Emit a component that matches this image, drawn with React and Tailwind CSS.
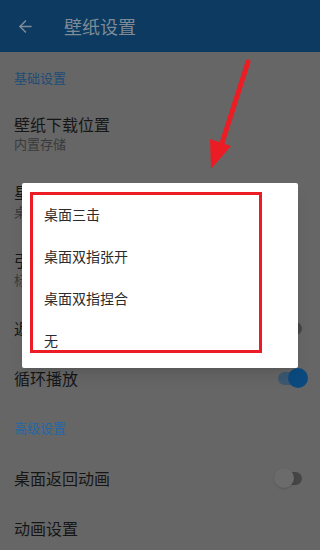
import React from 'react';
import { ArrowLeft } from 'lucide-react';

const font = { fontFamily: '"Noto Sans CJK SC", "Noto Sans", sans-serif' };

function Toggle({ on }) {
  return (
    <div className="relative w-[26px] h-[20px] flex items-center">
      <div className={`w-[24px] h-[13px] rounded-full ${on ? 'bg-[#3b5872]' : 'bg-[#454545]'}`} />
      <div
        className={`absolute top-0 w-[20px] h-[20px] rounded-full ${on ? 'left-[10px] bg-[#0b4a7e]' : 'left-[-4px] bg-[#6b6b6b] shadow'}`}
      />
    </div>
  );
}

function Row({ title, sub, toggle }) {
  if (sub) {
    return (
      <div className="h-[68px] px-[14px] pt-[14px] flex flex-col">
        <span className="text-[16px] leading-[22px] text-[#161616]">{title}</span>
        <span className="text-[13px] leading-[18px] text-[#3a3a3a]">{sub}</span>
      </div>
    );
  }
  return (
    <div className="h-[50px] pl-[14px] pr-[16px] flex items-center justify-between">
      <span className="text-[16px] text-[#161616]">{title}</span>
      {toggle !== undefined && <Toggle on={toggle} />}
    </div>
  );
}

export default function App() {
  const items = ['桌面三击', '桌面双指张开', '桌面双指捏合', '无'];
  return (
    <div className="relative w-[320px] h-[550px] overflow-hidden bg-[#666666]" style={font}>
      <div className="h-[52px] bg-[#0c3a60] flex items-center">
        <ArrowLeft className="ml-[16px] w-[19px] h-[19px] text-[#7f8a96]" strokeWidth={2} />
        <span className="ml-[29px] text-[18px] text-[#7f8a96]">壁纸设置</span>
      </div>

      <div className="h-[47px] px-[14px] pt-[16px] text-[13px] leading-[20px] text-[#1e4d78]">基础设置</div>
      <Row title="壁纸下载位置" sub="内置存储" />
      <Row title="星期壁纸切换方式" sub="桌面双指张开" />
      <Row title="引导页样式" sub="标准" />
      <Row title="返回桌面切换" toggle={false} />
      <Row title="循环播放" toggle={true} />
      <div className="h-[50px] px-[14px] flex items-center text-[13px] text-[#2368a6]">高级设置</div>
      <Row title="桌面返回动画" toggle={false} />
      <Row title="动画设置" />

      {/* dialog */}
      <div className="absolute left-[22px] top-[183px] w-[276px] bg-white rounded-[2px] shadow-lg pt-[10px] pb-[7px]">
        {items.map((t) => (
          <div key={t} className="h-[42px] pl-[22px] flex items-center text-[14px] text-[#2b2b2b]">
            {t}
          </div>
        ))}
        <div className="absolute left-[8px] top-[9px] w-[232px] h-[161px] border-[3px] border-[#ec1c24]" />
      </div>

      {/* annotation arrow */}
      <svg className="absolute left-0 top-0" width="320" height="550" viewBox="0 0 320 550">
        <line x1="248" y1="62" x2="222" y2="143" stroke="#ec1c24" strokeWidth="5" strokeLinecap="round" />
        <polygon points="210,139 231,146 211,169" fill="#ec1c24" />
      </svg>
    </div>
  );
}
